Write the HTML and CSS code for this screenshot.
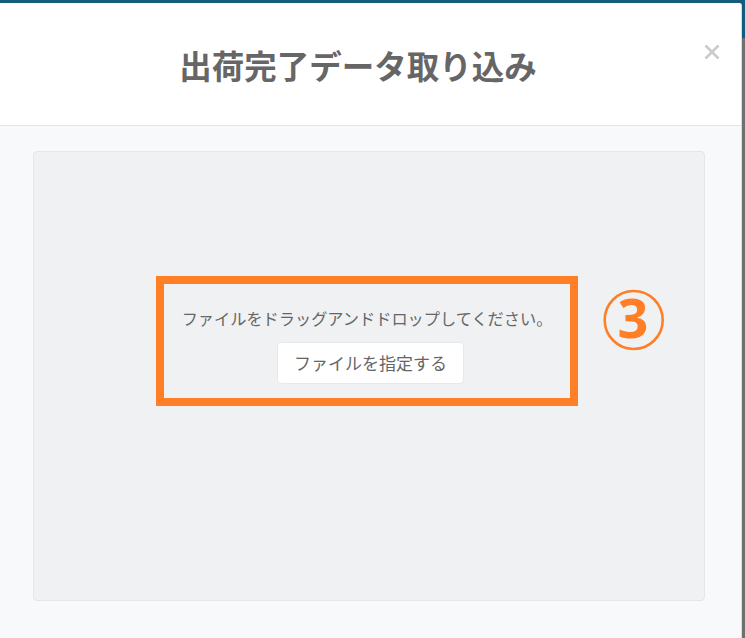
FILE: index.html
```html
<!DOCTYPE html>
<html lang="ja">
<head>
  <meta charset="UTF-8">
  <meta name="viewport" content="width=device-width, initial-scale=1">
  <title>出荷完了データ取り込み</title>
  <link rel="stylesheet" href="styles.css">
</head>
<body>
  <div class="ecran">
    <div class="modal">
      <div class="modal-header">
        <h1>出荷完了データ取り込み</h1>
        <button class="fermer" aria-label="閉じる">
          <svg width="16" height="16" viewBox="0 0 16 16">
            <path d="M1.5 1.5 L14.5 14.5 M14.5 1.5 L1.5 14.5" stroke="#cbcbcb" stroke-width="2.6" fill="none"/>
          </svg>
        </button>
      </div>

      <div class="modal-body">
        <div class="dropzone">
          <div class="repere">
            <p>ファイルをドラッグアンドドロップしてください。</p>
            <button class="btn-fichier">ファイルを指定する</button>
            <svg class="numero" width="66" height="72" viewBox="0 0 66 72">
              <circle cx="32.7" cy="32" r="29" stroke="#ff7f27" stroke-width="2.6" fill="none"/>
              <text x="32" y="49.5" text-anchor="middle">3</text>
            </svg>
          </div>
        </div>
      </div>
    </div>
    <div class="bord"></div>
  </div>
</body>
</html>
```

FILE: styles.css
```css
html, body {
  margin: 0;
  height: 100%;
}
body {
  font-family: "Noto Sans CJK JP", "Noto Sans", sans-serif;
  background-color: #115d7d;
  overflow: hidden;
}
.ecran {
  display: flex;
  height: 100%;
}
.modal {
  width: 741px;
  margin-top: 3px;
  background-color: #f8f9fb;
  border-right: 1px solid #dcdcdc;
  border-top-right-radius: 3px;
}
.bord {
  flex: 1;
  background: linear-gradient(#115d7d 0, #115d7d 38px, #6f6f6f 38px);
}
.modal-header {
  display: flex;
  align-items: center;
  height: 122px;
  padding-left: 12px;
  background-color: #fff;
  border-bottom: 1px solid #e3e3e3;
  border-top-right-radius: 3px;
}
.modal-header h1 {
  flex: 1;
  margin: 0;
  text-align: center;
  font-size: 32.5px;
  font-weight: bold;
  color: #666;
}
.fermer {
  align-self: flex-start;
  width: 16px;
  height: 16px;
  margin: 41px 21px 0 0;
  padding: 0;
  border: none;
  background: none;
}
.fermer svg {
  display: block;
}
.modal-body {
  padding: 25px 36px 37px 33px;
}
.dropzone {
  display: flex;
  flex-direction: column;
  align-items: center;
  padding-top: 124px;
  box-sizing: border-box;
  height: 450px;
  background-color: #f0f1f3;
  border: 1px solid #e5e6e9;
  border-radius: 4px;
}
.repere {
  position: relative;
  display: flex;
  flex-direction: column;
  align-items: center;
  padding: 23px 18px 14px 18px;
  border: 8px solid #ff7f27;
  margin-right: 4px;
}
.repere p {
  margin: 0;
  font-size: 16.2px;
  line-height: 22px;
  color: #666;
}
.btn-fichier {
  margin: 13px 0 0 7px;
  padding: 8px 16px;
  font-family: "Noto Sans CJK JP", "Noto Sans", sans-serif;
  font-size: 17px;
  line-height: 24px;
  color: #666;
  background-color: #fff;
  border: 1px solid #e6e8eb;
  border-radius: 4px;
}
.numero {
  position: absolute;
  left: 437px;
  top: 4px;
  overflow: visible;
}
.numero text {
  font-family: "Noto Sans", sans-serif;
  font-weight: bold;
  font-size: 54px;
  fill: #ff7f27;
}
```
